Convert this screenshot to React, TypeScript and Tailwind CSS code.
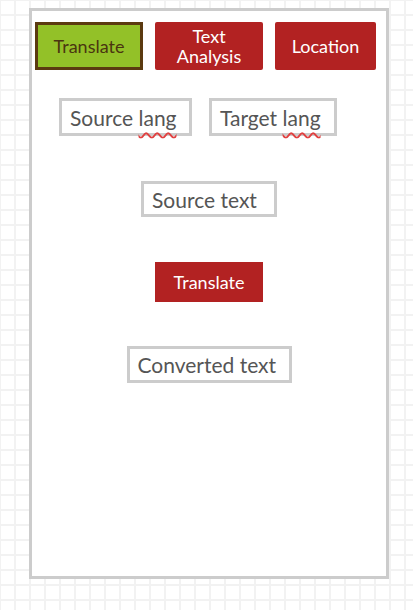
import React from 'react'

const font = { fontFamily: 'Lato, "Open Sans", sans-serif' }

function Field({ label, size, wavy }: { label: string; size: string; wavy?: string }) {
  return (
    <div
      className={`${size} border-[3px] border-[#cccccc] bg-white flex items-center pl-[8px] text-[21px] text-[#555555] leading-none whitespace-nowrap`}
    >
      {wavy ? (
        <span>
          {label}{' '}
          <span className="underline decoration-wavy decoration-[#e04040] decoration-[1.5px] underline-offset-[6px]">
            {wavy}
          </span>
        </span>
      ) : (
        label
      )}
    </div>
  )
}

export default function App() {
  return (
    <div
      style={font}
      className="w-full h-[610px] overflow-hidden bg-white bg-[linear-gradient(to_right,#f2f2f2_2px,transparent_2px),linear-gradient(to_bottom,#f2f2f2_2px,transparent_2px)] bg-[size:15px_15px] bg-[position:14px_14px] pt-[8px]"
    >
      <div className="ml-[29px] w-[360px] h-[571px] border-[3px] border-[#cccccc] bg-white flex flex-col">
        <div className="flex gap-[12px] pl-[3px] pt-[11px]">
          <button className="w-[108px] h-[48px] bg-[#93c128] border-[3px] border-[#5b3a10] text-[#4a3510] text-[18px]">
            Translate
          </button>
          <button className="w-[108px] h-[48px] bg-[#b22222] rounded-[2px] text-white text-[18px] leading-[20px]">
            Text
            <br />
            Analysis
          </button>
          <button className="w-[101px] h-[48px] bg-[#b22222] rounded-[2px] text-white text-[18px]">
            Location
          </button>
        </div>

        <div className="flex gap-[17px] pl-[27px] mt-[28px]">
          <Field label="Source" wavy="lang" size="w-[133px] h-[38px]" />
          <Field label="Target" wavy="lang" size="w-[128px] h-[38px]" />
        </div>

        <div className="flex flex-col items-center mt-[45px]">
          <Field label="Source text" size="w-[136px] h-[36px]" />
          <button className="mt-[45px] w-[108px] h-[40px] bg-[#b22222] text-white text-[18px]">
            Translate
          </button>
          <div className="mt-[44px]">
            <Field label="Converted text" size="w-[165px] h-[37px]" />
          </div>
        </div>
      </div>
    </div>
  )
}
